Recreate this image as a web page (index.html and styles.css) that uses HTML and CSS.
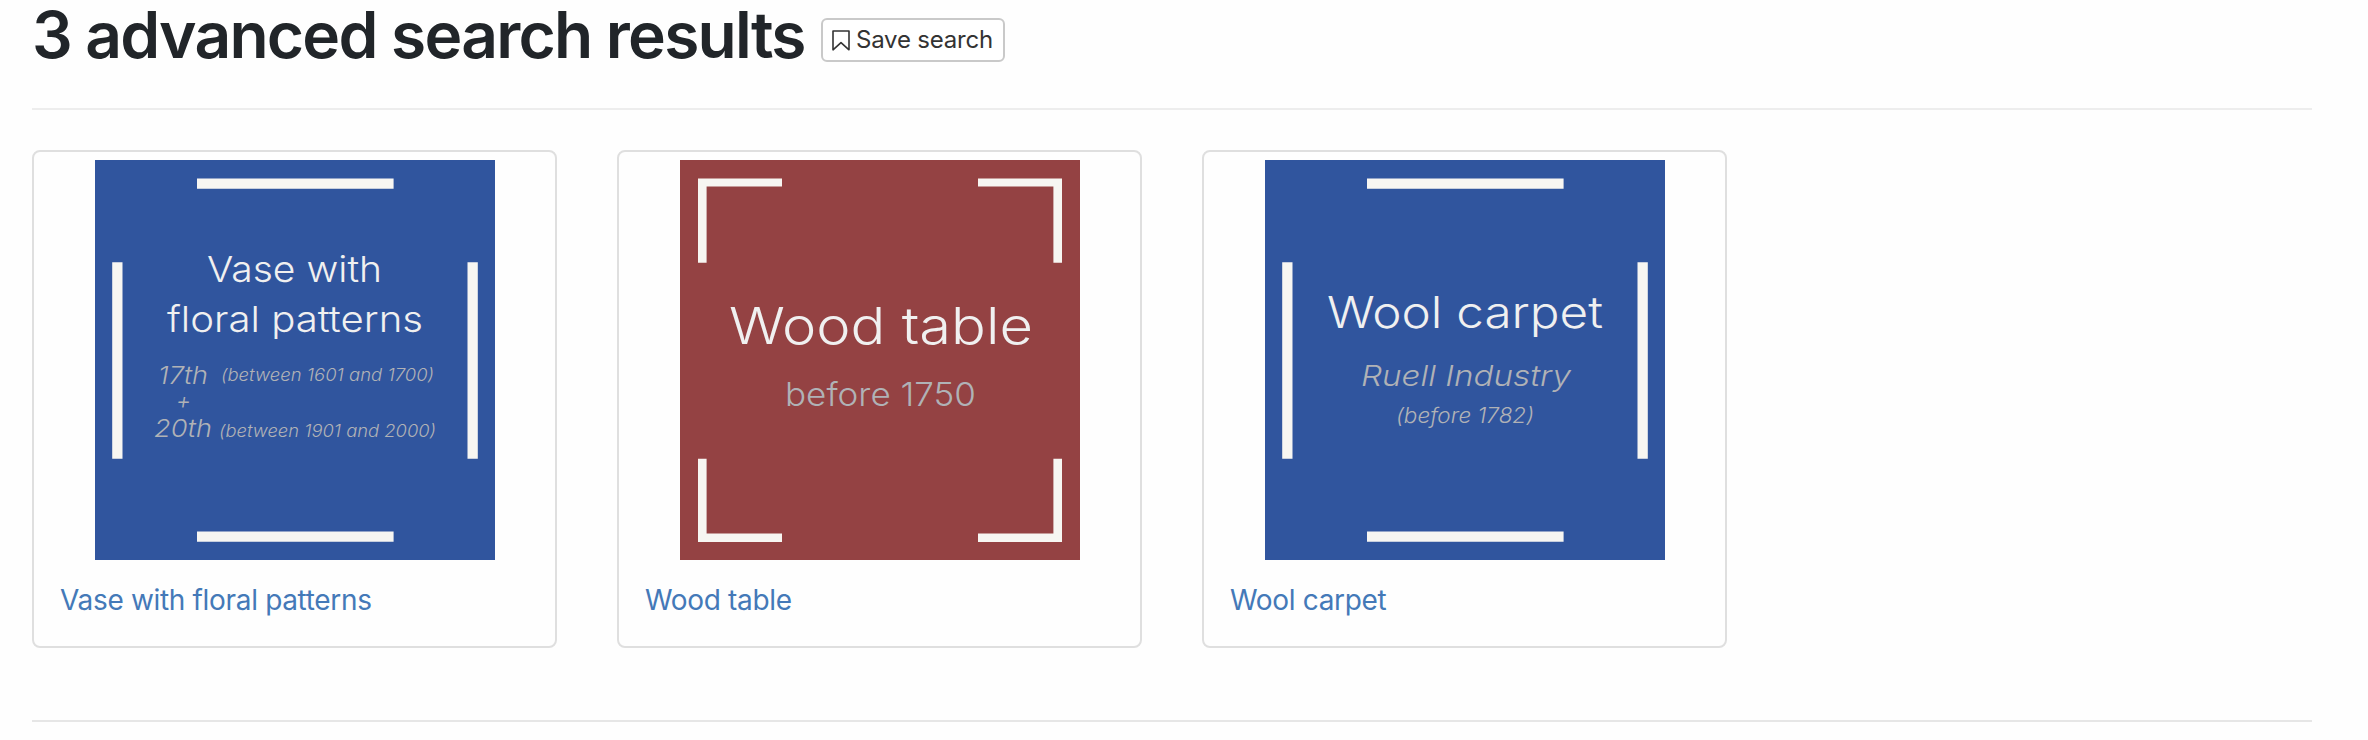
FILE: index.html
```html
<!DOCTYPE html>
<html lang="en">
<head>
<meta charset="utf-8">
<title>Advanced search results</title>
<link rel="stylesheet" href="styles.css">
</head>
<body>
<main class="page">
  <header class="results-header">
    <h1 class="results-title">3 advanced search results</h1>
    <button class="save-button" type="button">
      <svg class="save-icon" viewBox="0 0 18 21" aria-hidden="true"><path d="M1 1H17V19.8L9 12.6L1 19.8Z"/></svg>
      <span>Save search</span>
    </button>
  </header>
  <section class="results">
    <article class="card">
      <svg class="tile tile-blue" viewBox="0 0 400 400" role="img">
        <path class="bars" d="M102 18.4H298.6V28.7H102ZM102 371.4H298.6V381.8H102ZM17.2 102.2H27.5V298.8H17.2ZM372.5 102.2H382.8V298.8H372.5Z"/>
        <text class="title" x="112" y="121.5" font-size="36" textLength="175" lengthAdjust="spacingAndGlyphs">Vase with</text>
        <text class="title" x="72" y="172" font-size="36" textLength="256" lengthAdjust="spacingAndGlyphs">floral patterns</text>
        <text class="note italic" x="63" y="224" font-size="24.5" textLength="50" lengthAdjust="spacingAndGlyphs">17th</text>
        <text class="note italic" x="126" y="220.5" font-size="17" textLength="213" lengthAdjust="spacingAndGlyphs">(between 1601 and 1700)</text>
        <text class="note italic" x="81" y="248.5" font-size="23">+</text>
        <text class="note italic" x="59" y="277" font-size="24.5" textLength="58" lengthAdjust="spacingAndGlyphs">20th</text>
        <text class="note italic" x="124" y="277" font-size="17" textLength="217" lengthAdjust="spacingAndGlyphs">(between 1901 and 2000)</text>
      </svg>
      <a class="card-link">Vase with floral patterns</a>
    </article>
    <article class="card">
      <svg class="tile tile-red" viewBox="0 0 400 400" role="img">
        <path class="bars" d="M18 18.4H102V26.6H26.6V102.8H18ZM298 18.4H382V102.8H373.4V26.6H298ZM18 298.8H26.6V373.4H102V382H18ZM373.4 298.8H382V382H298V373.4H373.4Z"/>
        <text class="title" x="49" y="184" font-size="50.5" textLength="304" lengthAdjust="spacingAndGlyphs">Wood table</text>
        <text class="note" x="105" y="246" font-size="32.5" textLength="191" lengthAdjust="spacingAndGlyphs">before 1750</text>
      </svg>
      <a class="card-link">Wood table</a>
    </article>
    <article class="card">
      <svg class="tile tile-blue" viewBox="0 0 400 400" role="img">
        <path class="bars" d="M102 18.4H298.6V28.7H102ZM102 371.4H298.6V381.8H102ZM17.2 102.2H27.5V298.8H17.2ZM372.5 102.2H382.8V298.8H372.5Z"/>
        <text class="title" x="62" y="168" font-size="44" textLength="276" lengthAdjust="spacingAndGlyphs">Wool carpet</text>
        <text class="note italic" x="96" y="226" font-size="28.5" textLength="210" lengthAdjust="spacingAndGlyphs">Ruell Industry</text>
        <text class="note italic" x="131" y="262.5" font-size="21" textLength="138" lengthAdjust="spacingAndGlyphs">(before 1782)</text>
      </svg>
      <a class="card-link">Wool carpet</a>
    </article>
  </section>
</main>
</body>
</html>
```
FILE: styles.css
```css
* {
  box-sizing: border-box;
}

body {
  margin: 0;
  background: #fefefe;
  color: #212529;
  font-family: Inter, "Liberation Sans", sans-serif;
}

.page {
  min-height: 740px;
  padding: 0 56px 0 32px;
}

.results-header {
  display: flex;
  align-items: flex-start;
  height: 110px;
  border-bottom: 2px solid #ededed;
}

.results-title {
  width: 789px;
  margin: 0;
  font-size: 64px;
  font-weight: 600;
  line-height: 70px;
  letter-spacing: -1.74px;
  white-space: nowrap;
}

.save-button {
  display: flex;
  align-items: center;
  gap: 6px;
  width: 184px;
  height: 44px;
  margin: 18px 0 0;
  padding: 0 0 0 9px;
  border: 2px solid #c9c9c9;
  border-radius: 6px;
  background: #fff;
  color: #333;
  font: 400 24px/36px Inter, "Liberation Sans", sans-serif;
  letter-spacing: -0.2px;
  white-space: nowrap;
}

.save-icon {
  width: 18px;
  height: 21px;
  flex: none;
  fill: none;
  stroke: #333;
  stroke-width: 1.6;
  stroke-linejoin: round;
}

.results {
  display: grid;
  grid-template-columns: repeat(4, 1fr);
  column-gap: 60px;
  height: 612px;
  padding-top: 40px;
  border-bottom: 2px solid #e6e6e6;
}

.card {
  display: flex;
  flex-direction: column;
  height: 498px;
  padding: 8px 0 0;
  border: 2px solid #dfdfdf;
  border-radius: 8px;
  background: #fefefe;
}

.tile {
  display: block;
  width: 400px;
  height: 400px;
  margin-left: 61px;
  font-family: Inter, "Liberation Sans", sans-serif;
}

.tile-blue {
  background: #30559e;
}

.tile-red {
  background: #944243;
}

.bars {
  fill: #f7f6f2;
}

.title {
  fill: #f0f0f0;
  font-weight: 300;
}

.note {
  fill: #b0b2b6;
  font-weight: 300;
}

.italic {
  font-style: italic;
}

.card-link {
  margin: 20px 0 0 26px;
  color: #4479b8;
  font-size: 28px;
  line-height: 40px;
  letter-spacing: -0.33px;
  white-space: nowrap;
}
```
